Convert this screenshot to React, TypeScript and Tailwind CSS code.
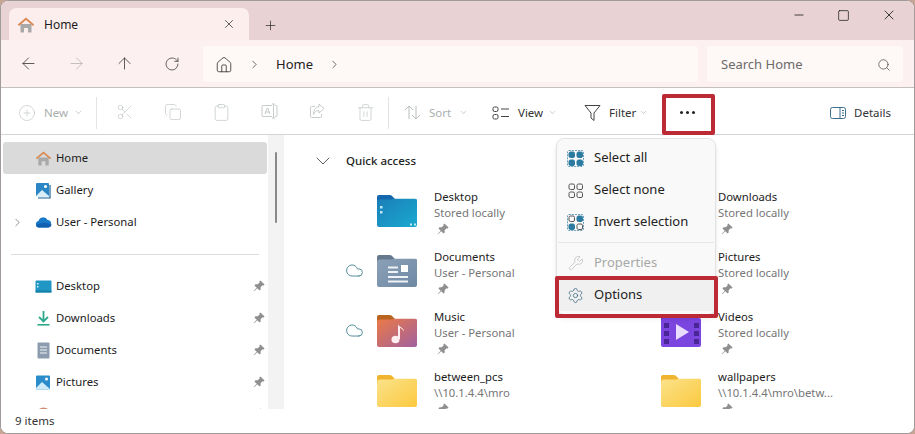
import {
  ArrowLeft,
  ArrowRight,
  ArrowUp,
  ChevronDown,
  ChevronRight,
  CirclePlus,
  Clipboard,
  Cloud,
  Copy,
  Home,
  Minus,
  Plus,
  RotateCw,
  Scissors,
  Search,
  Settings,
  Square,
  Trash2,
  Wrench,
  X,
} from 'lucide-react';
import type { ReactNode } from 'react';

function HomeColor({ size = 18 }: { size?: number }) {
  return (
    <svg width={size} height={size} viewBox="0 0 18 18">
      <path d="M3.500 8h11v8.500h-3.500v-4.500h-4v4.500H3.500z" fill="#a9a9a9" />
      <path d="M9 1.500 .8 8.500l1.200 1.400L9 4l7 5.900 1.200-1.400z" fill="#d98a55" />
    </svg>
  );
}

function GalleryColor() {
  return (
    <svg width="17" height="17" viewBox="0 0 17 17">
      <rect x="1" y="1" width="13" height="14" rx="1" fill="#2b86c5" />
      <path d="M15 3v13H3" fill="none" stroke="#1d5f96" strokeWidth="1.200" />
      <path d="M1 14l6-6 7 6v1H1z" fill="#d8eef8" />
      <circle cx="10.500" cy="4.500" r="1.500" fill="#ffffff" />
    </svg>
  );
}

function OneDriveColor() {
  return (
    <svg width="17" height="12" viewBox="0 0 17 12">
      <path d="M4 11.500a3.300 3.300 0 0 1-.6-6.500A5 5 0 0 1 12.600 4a3.800 3.800 0 0 1 .6 7.500z" fill="#1a78c9" />
      <path d="M1 9.500c2-2.500 9-3.500 15.500-1A3.500 3.500 0 0 1 13 11.500H4A3 3 0 0 1 1 9.500z" fill="#0f5fb0" />
    </svg>
  );
}

function DesktopSmall() {
  return (
    <svg width="17" height="13" viewBox="0 0 17 13">
      <rect x="0.500" y="0.500" width="16" height="12" rx="1" fill="#1f96c4" />
      <rect x="0.500" y="10.500" width="16" height="2" fill="#1580a8" />
      <rect x="2" y="3" width="1.500" height="1.500" fill="#d3f1fb" />
      <rect x="2" y="6" width="1.500" height="1.500" fill="#d3f1fb" />
    </svg>
  );
}

function DownloadsSmall() {
  return (
    <svg width="17" height="17" viewBox="0 0 17 17">
      <path d="M8.500 1v10M4 7l4.500 4.500L13 7" fill="none" stroke="#2fa98c" strokeWidth="1.800" />
      <rect x="2.500" y="14" width="12" height="1.600" fill="#2fa98c" />
    </svg>
  );
}

function DocumentsSmall() {
  return (
    <svg width="17" height="17" viewBox="0 0 17 17">
      <rect x="2.500" y="0.500" width="12" height="16" rx="1" fill="#8c9cae" />
      <path d="M5 5h7M5 8h7M5 11h7" stroke="#f0f3f6" strokeWidth="1" />
    </svg>
  );
}

function PicturesSmall() {
  return (
    <svg width="17" height="15" viewBox="0 0 17 15">
      <rect x="1" y="0.500" width="14" height="14" rx="1" fill="#2a8ccb" />
      <path d="M1 13l6-6 8 7v.5H1z" fill="#cfeaf8" />
      <circle cx="11.500" cy="4" r="1.500" fill="#ffffff" />
    </svg>
  );
}

function MusicSmall() {
  return (
    <svg width="17" height="15" viewBox="0 0 17 15">
      <circle cx="8.500" cy="8" r="7.500" fill="#d08a72" />
    </svg>
  );
}

function PinIcon({ className = '' }: { className?: string }) {
  return (
    <svg width="12" height="12" viewBox="0 0 11 11" className={className}>
      <path d="M6.800.4 10.600 4.200 9.500 5.200 8.700 4.900 7 6.700 7 8.700 6 9.700 3.900 7.600 1 10.400.6 10 3.400 7.100 1.300 5 2.300 4 4.300 4 6.100 2.200 5.800 1.400z" fill="#8f8f8f" />
    </svg>
  );
}

// Large folder art shared by the Quick access tiles
function Folder({ tab, from, to, children }: { tab: string; from: string; to: string; children?: ReactNode }) {
  const id = `folder-${from.slice(1)}-${to.slice(1)}`;
  return (
    <svg width="42" height="34" viewBox="0 0 42 34">
      <defs>
        <linearGradient id={id} x1="0" y1="0" x2="1" y2="1">
          <stop offset="0" stopColor={from} />
          <stop offset="1" stopColor={to} />
        </linearGradient>
      </defs>
      <path d="M1 3a2 2 0 0 1 2-2h10a4 4 0 0 1 4 2l2 2h20a2 2 0 0 1 2 2v6H1z" fill={tab} />
      <path d="M1 8.500q0-3 3-3h12l2-.7h21a2 2 0 0 1 2 2V31a2 2 0 0 1-2 2H3a2 2 0 0 1-2-2z" fill={`url(#${id})`} />
      {children}
    </svg>
  );
}

const folderArt: Record<string, ReactNode> = {
  desktop: (
    <Folder tab="#1467ad" from="#1a7fb8" to="#1aa9cf">
      <rect x="4" y="12" width="2.500" height="2.500" fill="#bfeaf4" />
      <rect x="4" y="17" width="2.500" height="2.500" fill="#bfeaf4" />
      <rect x="34" y="29.500" width="2" height="2" fill="#bfeaf4" />
      <rect x="38" y="29.500" width="2" height="2" fill="#bfeaf4" />
    </Folder>
  ),
  documents: (
    <Folder tab="#66788c" from="#8ba1b8" to="#6f88a3">
      <rect x="25" y="11" width="7" height="7" fill="#ffffff" />
      <path d="M12 13.500h10M12 18h10M12 23h20M12 27.500h20" stroke="#eef2f6" strokeWidth="2" />
    </Folder>
  ),
  music: (
    <Folder tab="#b86420" from="#ec7a46" to="#a0609f">
      <ellipse cx="19.500" cy="25.500" rx="4" ry="3.800" fill="#ffeff0" />
      <path d="M22 25V9.500c0 4 6 3.500 6 8-1.500-2.500-3-3.500-4-3.500V25z" fill="#ffeff0" />
    </Folder>
  ),
  yellow: <Folder tab="#f0b42e" from="#fbe28a" to="#fbc93f" />,
  downloads: (
    <Folder tab="#1c8c74" from="#2bb596" to="#1f9d82">
      <path d="M21 9v14M15 18l6 6 6-6" fill="none" stroke="#ffffff" strokeWidth="2" />
    </Folder>
  ),
  pictures: (
    <Folder tab="#1668a8" from="#2a95d2" to="#1d7dbf">
      <path d="M10 28l9-9 13 9z" fill="#ffffff" />
      <circle cx="28" cy="14" r="2.500" fill="#ffffff" />
    </Folder>
  ),
  videos: (
    <svg width="42" height="34" viewBox="0 0 42 34">
      <path d="M1 3a2 2 0 0 1 2-2h10a4 4 0 0 1 4 2l2 2h20a2 2 0 0 1 2 2v6H1z" fill="#5a2fa8" />
      <path d="M1 6a2 2 0 0 1 2-2h36a2 2 0 0 1 2 2v25a2 2 0 0 1-2 2H3a2 2 0 0 1-2-2z" fill="#7b45e0" />
      <path d="M4 9h5v5H4zM4 17h5v5H4zM4 25h5v5H4zM34 9h5v5h-5zM34 17h5v5h-5zM34 25h5v5h-5z" fill="#4a2596" />
      <path d="M16 10l13 8-13 8z" fill="#eadcff" />
    </svg>
  ),
};

const navItems: { label: string; icon: ReactNode; pinned?: boolean }[] = [
  { label: 'Desktop', icon: <DesktopSmall />, pinned: true },
  { label: 'Downloads', icon: <DownloadsSmall />, pinned: true },
  { label: 'Documents', icon: <DocumentsSmall />, pinned: true },
  { label: 'Pictures', icon: <PicturesSmall />, pinned: true },
  { label: 'Music', icon: <MusicSmall />, pinned: true },
];

const files = [
  { name: 'Desktop', sub: 'Stored locally', art: 'desktop' },
  { name: 'Downloads', sub: 'Stored locally', art: 'downloads' },
  { name: 'Documents', sub: 'User - Personal', art: 'documents', cloud: true },
  { name: 'Pictures', sub: 'Stored locally', art: 'pictures' },
  { name: 'Music', sub: 'User - Personal', art: 'music', cloud: true },
  { name: 'Videos', sub: 'Stored locally', art: 'videos' },
  { name: 'between_pcs', sub: '\\\\10.1.4.4\\mro', art: 'yellow' },
  { name: 'wallpapers', sub: '\\\\10.1.4.4\\mro\\betw...', art: 'yellow' },
];

function SidebarRow({ icon, label, pinned, active, expand }: { icon: ReactNode; label: string; pinned?: boolean; active?: boolean; expand?: boolean }) {
  return (
    <div className={`flex h-8 shrink-0 items-center rounded-[3px] ${active ? 'bg-[#dadada]' : ''}`}>
      <div className="flex w-[32px] justify-center">
        {expand && <ChevronRight size={13} strokeWidth={1.2} className="ml-[-3px] text-[#555]" />}
      </div>
      <div className="flex w-[17px] justify-center">{icon}</div>
      <span className="ml-[4px] flex-1 text-[11.300px] text-[#1c1c1c]">{label}</span>
      {pinned && <PinIcon className="mr-[2px]" />}
    </div>
  );
}

function ToolIcon({ children }: { children: ReactNode }) {
  return <div className="flex w-[48px] justify-center text-[#bfc5c5]">{children}</div>;
}

function ToolLabel({ label, dim }: { label: string; dim?: boolean }) {
  return (
    <>
      <span className={`ml-[8px] w-[25px] whitespace-nowrap text-[11.500px] ${dim ? 'text-[#a9aeae]' : 'text-[#333]'}`}>{label}</span>
      <ChevronDown size={9} strokeWidth={1.2} className="ml-[5px] text-[#888]" />
    </>
  );
}

function SelectGlyph({ filled }: { filled: 'all' | 'none' | 'invert' }) {
  const on = '#2b7a9f';
  const off = '#555';
  const cells = [
    [1.500, 1.500, filled === 'all'],
    [9.500, 1.500, filled !== 'none'],
    [1.500, 9.500, filled !== 'none'],
    [9.500, 9.500, filled === 'all'],
  ] as const;
  return (
    <svg width="17" height="17" viewBox="0 0 17 17">
      {filled !== 'none' && (
        <rect x="0.500" y="0.500" width="16" height="16" rx="1.500" fill="none" stroke={on} strokeWidth="0.700" strokeDasharray="2 1" />
      )}
      {cells.map(([x, y, lit]) => (
        <rect key={`${x}-${y}`} x={x + 0.5} y={y + 0.5} width="5.500" height="5.500" rx="1.500" fill={lit ? on : 'none'} stroke={lit ? on : off} strokeWidth="1" />
      ))}
    </svg>
  );
}

function MenuRow({ icon, label, dim, hover }: { icon: ReactNode; label: string; dim?: boolean; hover?: boolean }) {
  return (
    <div className={`flex h-8 items-center gap-[10px] rounded-[3px] pl-[9px] ${hover ? 'bg-[#f0f0f0]' : ''}`}>
      <div className="flex w-[17px] justify-center">{icon}</div>
      <span className={`text-[13px] ${dim ? 'text-[#a8a8a8]' : 'text-[#222]'}`}>{label}</span>
    </div>
  );
}

export default function App() {
  return (
    <div className="h-[434px] w-[915px] overflow-hidden bg-[#c9a596] font-['Noto_Sans',sans-serif]">
      <div className="relative flex h-full w-full flex-col overflow-hidden rounded-[8px] border border-[#a09a9a] bg-white">
        {/* title bar */}
        <div className="flex h-[39px] shrink-0 items-end bg-[#e9d2d4] pl-[8px]">
          <div className="flex h-[32px] w-[240px] items-center rounded-t-[7px] bg-[#fbeeed] pb-[1px] pl-[8px] pr-[13px] pt-[3px]">
            <HomeColor />
            <span className="ml-[9px] flex-1 text-[12px] text-[#1c1c1c]">Home</span>
            <X size={14} strokeWidth={1.2} className="mb-[2px] text-[#222]" />
          </div>
          <Plus size={15} strokeWidth={1.1} className="mb-[7px] ml-[14px] text-[#222]" />
          <div className="ml-auto flex h-full items-start">
            <div className="flex h-[28px] w-[45px] items-center justify-center"><Minus size={14} strokeWidth={1.3} className="text-[#111]" /></div>
            <div className="flex h-[28px] w-[45px] items-center justify-center"><Square size={13} strokeWidth={1.3} className="text-[#111]" /></div>
            <div className="mr-[3px] flex h-[28px] w-[45px] items-center justify-center"><X size={16} strokeWidth={1.2} className="text-[#111]" /></div>
          </div>
        </div>

        {/* navigation bar */}
        <div className="flex h-[48px] shrink-0 items-center border-b border-[#c4c0c0] bg-[#fcf1f0] pl-[3px] pr-[11px]">
          <div className="flex w-[48px] justify-center"><ArrowLeft size={19} strokeWidth={1} className="text-[#333]" /></div>
          <div className="flex w-[48px] justify-center"><ArrowRight size={19} strokeWidth={1} className="text-[#b5b0b0]" /></div>
          <div className="flex w-[48px] justify-center"><ArrowUp size={19} strokeWidth={1} className="text-[#333]" /></div>
          <div className="flex w-[48px] justify-center"><RotateCw size={16} strokeWidth={1.1} className="text-[#333]" /></div>
          <div className="ml-[7px] flex h-[36px] w-[495px] items-center rounded-[3px] bg-[#fef8f7] pl-[12px] pt-[2px]">
            <Home size={18} strokeWidth={1.1} className="text-[#333]" />
            <ChevronRight size={13} strokeWidth={1.3} className="ml-[15px] text-[#333]" />
            <span className="ml-[15px] text-[13px] text-[#222]">Home</span>
            <ChevronRight size={13} strokeWidth={1.3} className="ml-[15px] text-[#333]" />
          </div>
          <div className="ml-[9px] flex h-[36px] flex-1 items-center justify-between rounded-[3px] bg-[#fef8f7] pl-[14px] pr-[12px] pt-[2px]">
            <span className="text-[13px] text-[#6d6a6a]">Search Home</span>
            <Search size={14} strokeWidth={1.2} className="text-[#444]" />
          </div>
        </div>

        {/* command bar */}
        <div className="flex h-[47px] shrink-0 items-center border-b border-[#d4d4d4] pl-[18px] pt-[3px]">
          <CirclePlus size={18} strokeWidth={0.9} className="ml-[-1px] text-[#bfc5c5]" />
          <ToolLabel label="New" dim />
          <div className="ml-[13px] h-[32px] w-px bg-[#e4e4e4]" />
          <div className="ml-[4px] flex">
            <ToolIcon><Scissors size={18} strokeWidth={0.9} /></ToolIcon>
            <ToolIcon><Copy size={18} strokeWidth={0.9} /></ToolIcon>
            <ToolIcon><Clipboard size={19} strokeWidth={0.9} /></ToolIcon>
            <ToolIcon>
              <svg width="17" height="16" viewBox="0 0 17 16" fill="none" stroke="currentColor" strokeWidth="0.900">
                <path d="M11 2.500H2a1 1 0 0 0-1 1v9a1 1 0 0 0 1 1h9M14 2.500h1a1 1 0 0 1 1 1v9a1 1 0 0 1-1 1h-1M12.500 1v14M11 1h3M11 15h3M4 11l2.300-6h.4L9 11M4.800 9h3.400" />
              </svg>
            </ToolIcon>
            <ToolIcon>
              <svg width="16" height="16" viewBox="0 0 16 16" fill="none" stroke="currentColor" strokeWidth="0.900">
                <path d="M6 3.500H2.500a1 1 0 0 0-1 1v9a1 1 0 0 0 1 1h9a1 1 0 0 0 1-1V11M10 1l5 4.500L10 10V7.500C7 7.500 5.500 9 4.500 11.500 4.500 7 6.500 4 10 3.500z" />
              </svg>
            </ToolIcon>
            <ToolIcon><Trash2 size={19} strokeWidth={0.9} /></ToolIcon>
          </div>
          <div className="ml-[-1px] h-[32px] w-px bg-[#e4e4e4]" />
          <svg width="17" height="15" viewBox="0 0 17 15" fill="none" stroke="#b9bebe" strokeWidth="1" className="ml-[15px]">
            <path d="M5 14V1M1 5l4-4 4 4M12 1v13M8 10l4 4 4-4" />
          </svg>
          <ToolLabel label="Sort" dim />
          <svg width="18" height="14" viewBox="0 0 18 14" fill="none" stroke="#444" strokeWidth="1" className="ml-[24px]">
            <rect x="1" y="1" width="5" height="4.500" rx="1.500" />
            <rect x="1" y="8.500" width="5" height="4.500" rx="1.500" />
            <path d="M9 3h8M9 10.500h8" />
          </svg>
          <ToolLabel label="View" />
          <svg width="17" height="18" viewBox="0 0 17 18" fill="none" stroke="#444" strokeWidth="1" className="ml-[27px]">
            <path d="M1 1.500h15l-6 7.500v7.500l-3-2.500V9z" strokeLinejoin="round" />
          </svg>
          <ToolLabel label="Filter" />
          <div className="ml-[32px] flex gap-[3px]">
            <span className="h-[3px] w-[3px] rounded-full bg-[#222]" />
            <span className="h-[3px] w-[3px] rounded-full bg-[#222]" />
            <span className="h-[3px] w-[3px] rounded-full bg-[#222]" />
          </div>
          <div className="ml-auto flex items-center pr-[23px]">
            <svg width="16" height="12" viewBox="0 0 16 12" fill="none" stroke="#3c6f8f" strokeWidth="1">
              <rect x="0.500" y="0.500" width="15" height="11" rx="2" />
              <path d="M10 .5v11M12 3.500h2M12 6h2M12 8.500h2" />
            </svg>
            <span className="ml-[8px] text-[11.500px] text-[#333]">Details</span>
          </div>
        </div>

        {/* body */}
        <div className="flex min-h-0 flex-1">
          <div className="flex w-[267px] shrink-0 flex-col overflow-hidden pl-[2px] pr-[1px] pt-[7px]">
            <SidebarRow icon={<HomeColor size={17} />} label="Home" active />
            <SidebarRow icon={<GalleryColor />} label="Gallery" />
            <SidebarRow icon={<OneDriveColor />} label="User - Personal" expand />
            <div className="mx-[8px] mb-[15px] mt-[16px] h-px shrink-0 bg-[#dcdcdc]" />
            {navItems.map((item) => (
              <SidebarRow key={item.label} icon={item.icon} label={item.label} pinned={item.pinned} />
            ))}
          </div>
          <div className="w-[16px] shrink-0 bg-[#f3f3f3] pl-[7px] pt-[17px]">
            <div className="h-[71px] w-[2px] rounded-full bg-[#8a8a8a]" />
          </div>
          <div className="min-w-0 flex-1 pt-[10px]">
            <div className="flex h-[32px] items-center pl-[27px]">
              <ChevronDown size={24} strokeWidth={0.8} className="text-[#333]" />
              <span className="ml-[11px] text-[11.500px] font-medium text-[#222]">Quick access</span>
            </div>
            <div className="mt-[12px] grid grid-cols-[284px_284px] pl-[55px]">
              {files.map((f) => (
                <div key={f.name} className="flex h-[60px]">
                  <div className="flex h-[42px] w-[37px] items-center">
                    {f.cloud && <Cloud size={19} strokeWidth={1.1} className="ml-[6px] text-[#3f7f8f]" />}
                  </div>
                  <div className="mt-[5px] h-[34px] w-[42px]">{folderArt[f.art]}</div>
                  <div className="ml-[16px] flex flex-col text-[11.300px] leading-[16px]">
                    <span className="text-[#1c1c1c]">{f.name}</span>
                    <span className="text-[#767676]">{f.sub}</span>
                    <PinIcon className="ml-[3px] mt-[2px]" />
                  </div>
                </div>
              ))}
            </div>
          </div>
        </div>

        {/* status bar */}
        <div className="flex h-[24px] shrink-0 items-center bg-white pl-[14px] text-[11.500px] text-[#333]">9 items</div>

        {/* "see more" dropdown */}
        <div className="absolute left-[555px] top-[137px] w-[160px] rounded-[8px] border border-[#e2e2e2] bg-[#f9f9f9] p-[1px] shadow-md">
          <div className="flex flex-col py-[2px]">
            <MenuRow icon={<SelectGlyph filled="all" />} label="Select all" />
            <MenuRow icon={<SelectGlyph filled="none" />} label="Select none" />
            <MenuRow icon={<SelectGlyph filled="invert" />} label="Invert selection" />
            <div className="my-[4px] h-px bg-[#e6e6e6]" />
            <MenuRow icon={<Wrench size={16} strokeWidth={1} className="text-[#b5b5b5]" />} label="Properties" dim />
            <MenuRow icon={<Settings size={17} strokeWidth={1} className="text-[#2f5f78]" />} label="Options" hover />
          </div>
        </div>

        {/* red callouts */}
        <div className="absolute left-[661px] top-[93px] h-[41px] w-[53px] rounded-[2px] border-[4px] border-[#bb2a35]" />
        <div className="absolute left-[554px] top-[275px] h-[42px] w-[163px] rounded-[2px] border-[4px] border-[#bb2a35]" />
      </div>
    </div>
  );
}
